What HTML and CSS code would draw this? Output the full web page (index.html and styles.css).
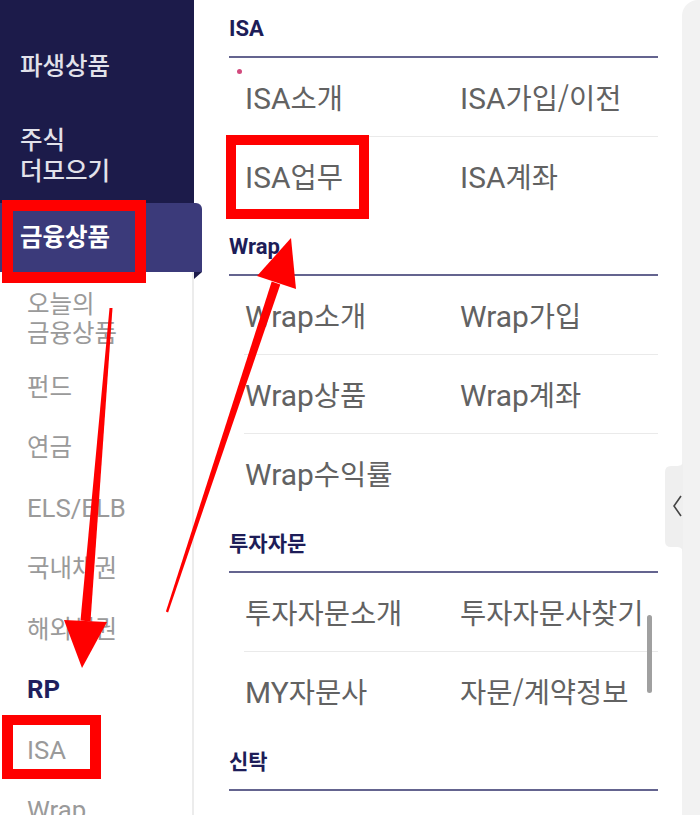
FILE: index.html
```html
<!DOCTYPE html>
<html lang="ko">
<head>
<meta charset="utf-8">
<title>전체메뉴</title>
<link rel="stylesheet" href="styles.css">
</head>
<body>
<div class="app">
  <nav class="side">
    <ul class="cat">
      <li class="cat-item">파생상품</li>
      <li class="cat-item">주식<br>더모으기</li>
      <li class="cat-item active">금융상품</li>
    </ul>
    <ul class="sub">
      <li class="sub-item multi">오늘의<br>금융상품</li>
      <li class="sub-item">펀드</li>
      <li class="sub-item">연금</li>
      <li class="sub-item"><span class="en">ELS/ELB</span></li>
      <li class="sub-item">국내채권</li>
      <li class="sub-item">해외채권</li>
      <li class="sub-item on"><span class="en">RP</span></li>
      <li class="sub-item"><span class="en">ISA</span></li>
      <li class="sub-item"><span class="en">Wrap</span></li>
    </ul>
  </nav>

  <main class="panel">
    <section class="group">
      <h2 class="group-title"><span class="en">ISA</span></h2>
      <div class="row">
        <a class="cell new" href="#"><span class="en">ISA</span>소개</a>
        <a class="cell" href="#"><span class="en">ISA</span>가입/이전</a>
      </div>
      <div class="row">
        <a class="cell" href="#"><span class="en">ISA</span>업무</a>
        <a class="cell" href="#"><span class="en">ISA</span>계좌</a>
      </div>
    </section>
    <section class="group">
      <h2 class="group-title"><span class="en">Wrap</span></h2>
      <div class="row">
        <a class="cell" href="#"><span class="en">Wrap</span>소개</a>
        <a class="cell" href="#"><span class="en">Wrap</span>가입</a>
      </div>
      <div class="row">
        <a class="cell" href="#"><span class="en">Wrap</span>상품</a>
        <a class="cell" href="#"><span class="en">Wrap</span>계좌</a>
      </div>
      <div class="row">
        <a class="cell" href="#"><span class="en">Wrap</span>수익률</a>
      </div>
    </section>
    <section class="group">
      <h2 class="group-title">투자자문</h2>
      <div class="row">
        <a class="cell" href="#">투자자문소개</a>
        <a class="cell" href="#">투자자문사찾기</a>
      </div>
      <div class="row">
        <a class="cell" href="#"><span class="en">MY</span>자문사</a>
        <a class="cell" href="#">자문/계약정보</a>
      </div>
    </section>
    <section class="group">
      <h2 class="group-title">신탁</h2>
    </section>
  </main>

  <aside class="rail">
    <svg class="handle" viewBox="0 0 18 90" width="18" height="90">
      <path d="M18 0 C17.5 3 15 4 11 4 L6 4 Q0 4 0 10 L0 79 Q0 85 6 85 L11 85 C15 85 17.5 86 18 90 Z" fill="#efefef"/>
      <polyline points="16,34 9,44 16,54" fill="none" stroke="#444" stroke-width="1.6"/>
    </svg>
  </aside>

  <div class="thumb"></div>

  <div class="box box-a"></div>
  <div class="box box-b"></div>
  <div class="box box-c"></div>
  <svg class="arrows" viewBox="0 0 700 815" width="700" height="815">
    <polygon points="109.5,308 112.5,308 90.5,621.4 80.5,620.6" fill="#ff0000"/>
    <polygon points="64,620 107,622 82,668" fill="#ff0000"/>
    <polygon points="165.9,611.6 168.1,612.4 280.3,284.4 271.7,281.6" fill="#ff0000"/>
    <polygon points="291,238 257,276 296,289" fill="#ff0000"/>
  </svg>
</div>
</body>
</html>
```

FILE: styles.css
```css
* { box-sizing: border-box; margin: 0; padding: 0; }
html, body { width: 700px; height: 815px; overflow: hidden; background: #fff; }
body { font-family: "Noto Sans CJK KR", "Noto Sans", sans-serif; }
ul { list-style: none; }
a { text-decoration: none; }

.app { position: relative; display: flex; height: 815px; }

/* left column */
.side { width: 194px; flex: none; display: flex; flex-direction: column; }
.cat { background: #1c1b4a; padding-top: 24px; }
.cat-item {
  padding: 25px 20px 18px;
  font-size: 24.5px; line-height: 31px;
  color: #e2e2ea; font-weight: 500;
}
.cat-item.active {
  position: relative; z-index: 2;
  width: 202px;
  padding: 17px 20px 21px;
  background: #3b3a7a;
  border-top-right-radius: 6px;
  color: #fff; font-weight: 700;
}
.cat-item.active::after {
  content: ""; position: absolute; right: 0; top: 100%;
  width: 8px; height: 7px; background: #1c1b4a;
  clip-path: polygon(0 0, 100% 0, 0 100%);
}
.sub { flex: 1; border-right: 2px solid #ececec; }
.sub-item {
  padding: 16px 0 15.5px 27px;
  font-size: 24.5px; line-height: 29px;
  color: #9a9a9a;
}
.sub-item.multi { padding: 15.5px 0 9px 27px; }
.sub-item.on { color: #1f1f5e; font-weight: 700; }

/* main menu panel */
.panel { flex: 1; margin-top: -2px; padding: 0 24px 0 35px; }
.group-title {
  height: 60px;
  padding-top: 17px;
  line-height: 24px; font-size: 21px; font-weight: 700;
  color: #1d1d58;
  border-bottom: 2px solid #64648f;
}
.row {
  display: grid; grid-template-columns: 215px 1fr; align-items: center;
  height: 79px; margin-left: 15px;
  border-bottom: 1px solid #eaeaea;
}
.row:last-child { border-bottom-color: transparent; }
.cell {
  position: relative; display: block;
  padding-left: 1px;
  font-size: 28.5px; line-height: 34px; font-weight: 400;
  color: #626262;
}
.cell.new::before {
  content: ""; position: absolute; left: -7px; top: -11px;
  width: 5px; height: 5px; border-radius: 50%; background: #d24a7d;
}
.en { font-family: Roboto, "Noto Sans", sans-serif; font-size: 1.05em; line-height: 0; }

/* right rail */
.rail { position: relative; width: 18px; flex: none; background: #f2f2f2; border-top-left-radius: 16px; }
.handle { position: absolute; left: -17px; top: 462px; width: 18px; height: 90px; }

.thumb {
  position: absolute; left: 647px; top: 615px;
  width: 5px; height: 78px; border-radius: 3px; background: #a0a0a0;
}

/* red annotations */
.box { position: absolute; z-index: 10; border: 11px solid #ff0000; }
.box-a { left: 2px; top: 200px; width: 144px; height: 83px; }
.box-b { left: 226px; top: 135px; width: 143px; height: 84px; border-width: 10px; }
.box-c { left: 2px; top: 715px; width: 99px; height: 64px; border-width: 10.5px 11px; }
.arrows { position: absolute; z-index: 10; left: 0; top: 0; width: 700px; height: 815px; pointer-events: none; }
```
